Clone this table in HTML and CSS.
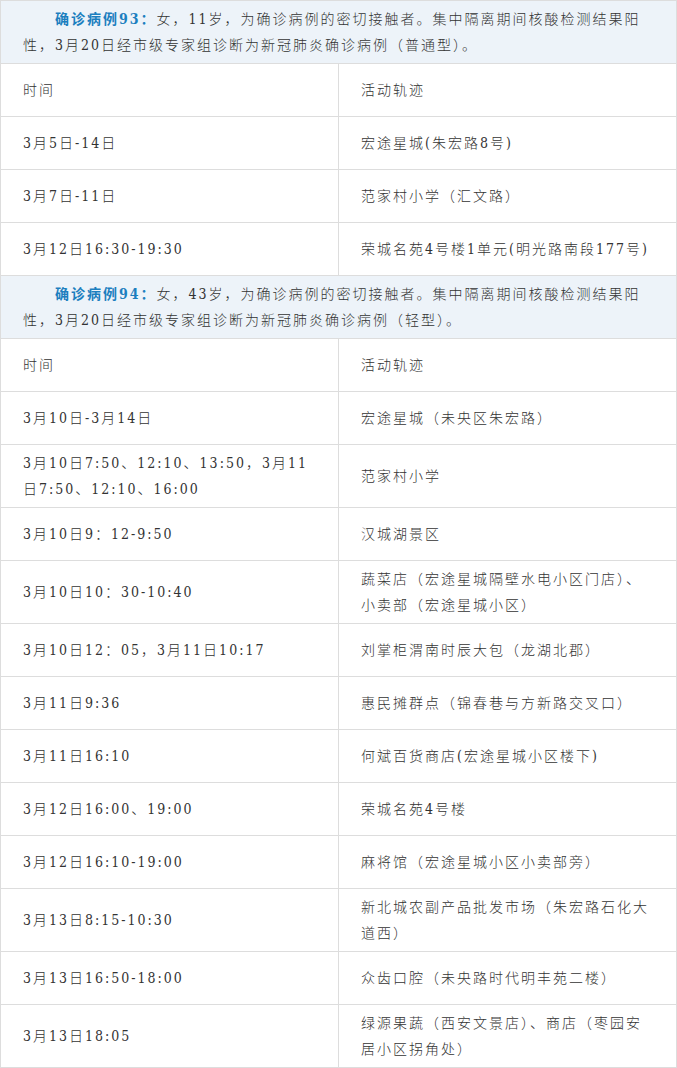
FILE: index.html
```html
<!DOCTYPE html>
<html lang="zh">
<head>
<meta charset="utf-8">
<link rel="stylesheet" href="styles.css">
</head>
<body>
<table class="track">
  <tr class="case"><td colspan="2"><p class="case-text"><strong class="case-name">确诊病例93：</strong>女，11岁，为确诊病例的密切接触者。集中隔离期间核酸检测结果阳性，3月20日经市级专家组诊断为新冠肺炎确诊病例（普通型）。</p></td></tr>
  <tr><td class="col">时间</td><td>活动轨迹</td></tr>
  <tr><td>3月5日-14日</td><td>宏途星城(朱宏路8号)</td></tr>
  <tr><td>3月7日-11日</td><td>范家村小学（汇文路）</td></tr>
  <tr><td>3月12日16:30-19:30</td><td>荣城名苑4号楼1单元(明光路南段177号)</td></tr>
  <tr class="case"><td colspan="2"><p class="case-text"><strong class="case-name">确诊病例94：</strong>女，43岁，为确诊病例的密切接触者。集中隔离期间核酸检测结果阳性，3月20日经市级专家组诊断为新冠肺炎确诊病例（轻型）。</p></td></tr>
  <tr><td>时间</td><td>活动轨迹</td></tr>
  <tr><td>3月10日-3月14日</td><td>宏途星城（未央区朱宏路）</td></tr>
  <tr><td>3月10日7:50、12:10、13:50，3月11日7:50、12:10、16:00</td><td>范家村小学</td></tr>
  <tr><td>3月10日9：12-9:50</td><td>汉城湖景区</td></tr>
  <tr><td>3月10日10：30-10:40</td><td>蔬菜店（宏途星城隔壁水电小区门店）、小卖部（宏途星城小区）</td></tr>
  <tr><td>3月10日12：05，3月11日10:17</td><td>刘掌柜渭南时辰大包（龙湖北郡）</td></tr>
  <tr><td>3月11日9:36</td><td>惠民摊群点（锦春巷与方新路交叉口）</td></tr>
  <tr><td>3月11日16:10</td><td>何斌百货商店(宏途星城小区楼下)</td></tr>
  <tr><td>3月12日16:00、19:00</td><td>荣城名苑4号楼</td></tr>
  <tr><td>3月12日16:10-19:00</td><td>麻将馆（宏途星城小区小卖部旁）</td></tr>
  <tr><td>3月13日8:15-10:30</td><td>新北城农副产品批发市场（朱宏路石化大道西）</td></tr>
  <tr><td>3月13日16:50-18:00</td><td>众齿口腔（未央路时代明丰苑二楼）</td></tr>
  <tr><td>3月13日18:05</td><td>绿源果蔬（西安文景店）、商店（枣园安居小区拐角处）</td></tr>
</table>
</body>
</html>
```

FILE: styles.css
```css
html, body {
  margin: 0;
  padding: 0;
  background: #ffffff;
}

.track {
  width: 677px;
  border-collapse: collapse;
  table-layout: fixed;
  font-family: "DejaVu Serif Condensed", "DejaVu Serif", "Noto Sans CJK SC", serif;
  font-stretch: condensed;
  font-size: 14px;
  font-weight: 300;
  letter-spacing: 2px;
  color: #333333;
}

.track td {
  border: 1px solid #dddddd;
  height: 42px;
  padding: 5px 22px;
  line-height: 26px;
  vertical-align: middle;
  box-sizing: content-box;
}

.track tr td:first-child {
  width: 292px;
}

.case td {
  background: #edf3f9;
  padding-right: 30px;
}

.case-text {
  margin: 0;
  text-indent: 32px;
}

.case-name {
  color: #1c7fbf;
  font-weight: bold;
}
```
